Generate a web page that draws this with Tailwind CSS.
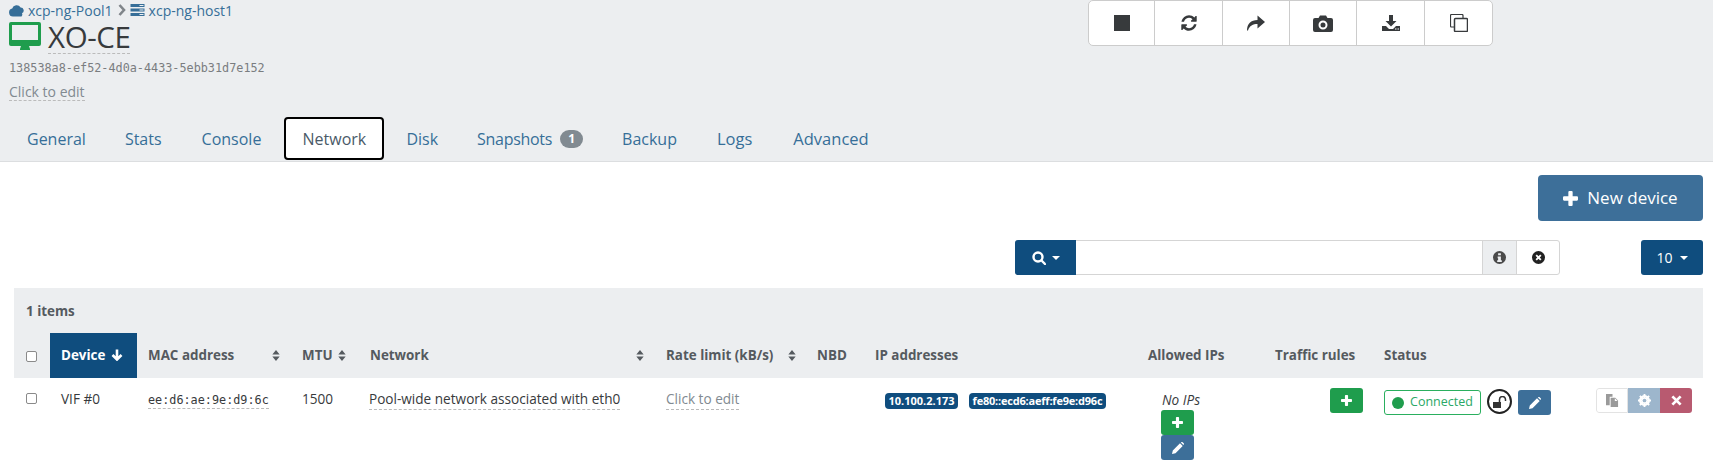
<!DOCTYPE html>
<html lang="en">
<head>
<meta charset="UTF-8">
<title>XO-CE Network</title>
<script src="https://cdn.jsdelivr.net/npm/@tailwindcss/browser@4"></script>
</head>
<body class="bg-white font-['Open_Sans',sans-serif] text-[14px] text-[#373a3c] overflow-hidden">
<div class="w-[1713px] h-[464px] overflow-hidden">

  <!-- Header -->
  <div class="bg-[#eceef0] h-[162px] border-b border-[#dcdee0]">
    <div class="flex h-[115px]">
      <div class="w-[1088px] pl-[9px]">
        <div class="h-[22px] flex items-center text-[14px] text-[#366e98] -mt-[1px]">
          <svg viewBox="0 0 16 12" class="w-[16px] h-[13px]" fill="#366e98"><path d="M4 12a4 4 0 0 1-.8-7.900A4.600 4.600 0 0 1 11.600 3 3 3 0 0 1 13 8.700 3 3 0 0 1 12.500 12z"/></svg>
          <span class="ml-[3px]">xcp-ng-Pool1</span>
          <svg viewBox="0 0 8 12" class="w-[8px] h-[12px] ml-[5px]" fill="none" stroke="#80858a" stroke-width="2.600"><path d="M1.500 1l4.500 5-4.500 5"/></svg>
          <svg viewBox="0 0 14 12" class="w-[15px] h-[12px] ml-[4px]" fill="#366e98"><path d="M0 0h14v3H0zM0 4.500h14v3H0zM0 9h14v3H0z"/><path d="M9 1h4v1H9zM9 5.500h4v1H9zM9 10h4v1H9z" fill="#eceef0"/></svg>
          <span class="ml-[4px]">xcp-ng-host1</span>
        </div>
        <div class="flex items-start h-[34px]">
          <svg viewBox="0 0 32 28" class="w-[32px] h-[28px] mt-[1px]" fill="#1f9d4d"><path fill-rule="evenodd" d="M2 0h28a2 2 0 0 1 2 2v20a2 2 0 0 1-2 2H20l1 3v1H11v-1l1-3H2a2 2 0 0 1-2-2V2a2 2 0 0 1 2-2zm1 3v15h26V3z"/></svg>
          <span class="ml-[7px] text-[29.500px] leading-[32px] font-medium tracking-[-0.4px] text-[#373a3c] border-b border-dashed border-[#bbb] h-[33px] pb-[1px]">XO-CE</span>
        </div>
        <div class="font-['DejaVu_Sans_Mono',monospace] text-[11.800px] leading-[14px] text-[#7a7d80] mt-[6px]">138538a8-ef52-4d0a-4433-5ebb31d7e152</div>
        <div class="mt-[6px]"><span class="text-[14px] leading-[16px] inline-block text-[#818a91] border-b border-dashed border-[#bbb]">Click to edit</span></div>
      </div>
      <div class="w-[405px] h-[46px] flex bg-white border border-[#cccccc] rounded-[5px] text-[#373a3c]">
        <div class="w-[66px] flex items-center justify-center border-r border-[#cccccc]">
          <svg viewBox="0 0 16 16" class="w-[16px] h-[16px]" fill="#373a3c"><rect width="16" height="16"/></svg>
        </div>
        <div class="w-[68px] flex items-center justify-center border-r border-[#cccccc]">
          <svg viewBox="0 0 1792 1792" class="w-[18px] h-[18px]" fill="#373a3c"><path d="M1639 1056q0 5-1 7-64 268-268 434.500t-478 166.500q-146 0-282.500-55t-243.500-157l-129 129q-19 19-45 19t-45-19-19-45v-448q0-26 19-45t45-19h448q26 0 45 19t19 45-19 45l-137 137q71 66 161 102t187 36q134 0 250-65t186-179q11-17 53-117 8-23 30-23h192q13 0 22.500 9.500t9.500 22.500zm25-800v448q0 26-19 45t-45 19h-448q-26 0-45-19t-19-45 19-45l138-138q-148-137-349-137-134 0-250 65t-186 179q-11 17-53 117-8 23-30 23h-199q-13 0-22.500-9.500t-9.500-22.500v-7q65-268 270-434.500t480-166.500q146 0 284 55.500t245 156.500l130-129q19-19 45-19t45 19 19 45z"/></svg>
        </div>
        <div class="w-[67px] flex items-center justify-center border-r border-[#cccccc]">
          <svg viewBox="0 0 18 16" class="w-[18px] h-[16px]" fill="#373a3c"><path d="M0 15.500C0 9 4 5 10.500 5V.500L18 7l-7.500 6.500V9C6 9 2.500 10.500 1 15.500z"/></svg>
        </div>
        <div class="w-[67px] flex items-center justify-center border-r border-[#cccccc]">
          <svg viewBox="0 0 20 17" class="w-[20px] h-[17px]" fill="#373a3c"><path fill-rule="evenodd" d="M2 3h3.500L7 .500h6L14.500 3H18a2 2 0 0 1 2 2v10a2 2 0 0 1-2 2H2a2 2 0 0 1-2-2V5a2 2 0 0 1 2-2zm8 2.500a4.500 4.500 0 1 0 0 9 4.500 4.500 0 0 0 0-9zm0 2a2.500 2.500 0 1 1 0 5 2.500 2.500 0 0 1 0-5z"/></svg>
        </div>
        <div class="w-[68px] flex items-center justify-center border-r border-[#cccccc]">
          <svg viewBox="0 0 18 16" class="w-[18px] h-[16px]" fill="#373a3c"><path d="M7 0h4v6h3.500L9 11.500 3.500 6H7z"/><path fill-rule="evenodd" d="M0 11h4l3 3h4l3-3h4v5H0zm13 2.500v1h1.500v-1zm2.500 0v1H17v-1z"/></svg>
        </div>
        <div class="flex-1 flex items-center justify-center">
          <svg viewBox="0 0 18 18" class="w-[18px] h-[18px]" fill="none" stroke="#373a3c" stroke-width="1.200"><path d="M4 13H1.500a1 1 0 0 1-1-1V1.500a1 1 0 0 1 1-1H12a1 1 0 0 1 1 1V4"/><rect x="4.500" y="4.500" width="13" height="13" rx="1" stroke-width="1.500"/></svg>
        </div>
      </div>
    </div>
    <div class="flex pl-[9px] h-[46px] items-center text-[16px] text-[#366e98]">
      <a class="pl-[18px] pr-[18px] pt-[2px]">General</a>
      <a class="pl-[21px] pr-[22px] pt-[2px]">Stats</a>
      <a class="px-[18px] pt-[2px]">Console</a>
      <a class="ml-[5px] w-[100px] h-[43px] pt-[1px] flex items-center justify-center bg-white border-2 border-black rounded-[4px] text-[#4a5a68]">Network</a>
      <a class="ml-[22px] pt-[2px]">Disk</a>
      <a class="ml-[39px] pt-[2px] flex items-center tracking-[-0.3px]">Snapshots<span class="ml-[8px] w-[23px] h-[18px] rounded-full bg-[#818a91] text-white text-[12px] font-bold flex items-center justify-center">1</span></a>
      <a class="ml-[39px] pt-[2px]">Backup</a>
      <a class="ml-[40px] pt-[2px] text-[16.500px]">Logs</a>
      <a class="ml-[41px] pt-[2px] text-[16.500px]">Advanced</a>
    </div>
  </div>

  <!-- Toolbar -->
  <div class="flex justify-end pr-[10px] pt-[13px]">
    <button class="w-[165px] h-[46px] rounded-[4px] bg-[#3d6f99] text-white text-[17px] flex items-center justify-center gap-[9px]">
      <svg viewBox="0 0 14 14" class="w-[15px] h-[15px]" fill="#fff"><path d="M5 1a1 1 0 0 1 1-1h2a1 1 0 0 1 1 1v4h4a1 1 0 0 1 1 1v2a1 1 0 0 1-1 1H9v4a1 1 0 0 1-1 1H6a1 1 0 0 1-1-1V9H1a1 1 0 0 1-1-1V6a1 1 0 0 1 1-1h4z"/></svg>
      New device
    </button>
  </div>
  <div class="flex pt-[19px] pl-[1015px] h-[67px]">
    <div class="w-[545px] h-[35px] flex rounded-[3px] border border-[#d5d5d5]">
      <div class="-m-[1px] w-[61px] h-[35px] bg-[#0f4d7e] rounded-l-[3px] flex items-center justify-center gap-[6px]">
        <svg viewBox="0 0 14 14" class="w-[14px] h-[14px]" fill="none" stroke="#fff" stroke-width="2.400"><circle cx="6" cy="6" r="4.500"/><path d="M9.500 9.500l3.500 3.500" stroke-linecap="round"/></svg>
        <span class="border-x-[4px] border-t-[4px] border-x-transparent border-t-white"></span>
      </div>
      <div class="flex-1"></div>
      <div class="w-[35px] bg-[#eceef0] border-x border-[#d5d5d5] flex items-center justify-center">
        <svg viewBox="0 0 14 14" class="w-[13px] h-[13px]"><circle cx="7" cy="7" r="7" fill="#4a4a4a"/><path d="M5.500 2.500h3v2h-3zM5 6h3.500v4H9.500v1.800h-5V10H5.500V7.800H5z" fill="#eceef0"/></svg>
      </div>
      <div class="w-[42px] flex items-center justify-center">
        <svg viewBox="0 0 14 14" class="w-[13px] h-[13px]"><circle cx="7" cy="7" r="7" fill="#222"/><path d="M4.500 4.500l5 5M9.500 4.500l-5 5" stroke="#fff" stroke-width="2"/></svg>
      </div>
    </div>
    <button class="ml-[81px] w-[62px] h-[35px] rounded-[3px] bg-[#0f4d7e] text-white text-[14px] flex items-center justify-center gap-[7px]">10<span class="border-x-[4px] border-t-[4px] border-x-transparent border-t-white"></span></button>
  </div>

  <!-- Table -->
  <div class="ml-[14px] w-[1689px]">
    <div class="bg-[#eceef0] h-[45px] pl-[12px] pt-[13px] text-[13.400px] leading-[20px] font-bold text-[#555a5f]">1 items</div>
    <table class="table-fixed border-collapse w-[1689px] text-left">
      <colgroup>
        <col class="w-[36px]"><col class="w-[87px]"><col class="w-[154px]"><col class="w-[68px]"><col class="w-[296px]"><col class="w-[151px]"><col class="w-[58px]"><col class="w-[273px]"><col class="w-[127px]"><col class="w-[109px]"><col class="w-[330px]">
      </colgroup>
      <thead class="bg-[#eceef0] text-[13.400px] font-bold text-[#555a5f]">
        <tr class="h-[45px]">
          <th class="pl-[12px] pt-[1px]"><span class="block w-[11px] h-[11px] bg-white border border-[#8a8a8a] rounded-[2px]"></span></th>
          <th class="bg-[#0f4d7e] text-white pl-[11px] h-[44px]">
            <span class="flex items-center gap-[6px]">Device
              <svg viewBox="0 0 12 12" class="w-[12px] h-[12px]" fill="none" stroke="#fff" stroke-width="2.600"><path d="M6 .500v10M1.500 6L6 10.500 10.500 6"/></svg>
            </span>
          </th>
          <th class="pl-[11px]"><span class="flex items-center justify-between pr-[11px]">MAC address<svg viewBox="0 0 8 12" class="w-[8px] h-[11px]" fill="#555a5f"><path d="M4 0l4 5H0zM4 12L0 7h8z"/></svg></span></th>
          <th class="pl-[11px]"><span class="flex items-center gap-[5px]">MTU<svg viewBox="0 0 8 12" class="w-[8px] h-[11px]" fill="#555a5f"><path d="M4 0l4 5H0zM4 12L0 7h8z"/></svg></span></th>
          <th class="pl-[11px]"><span class="flex items-center justify-between pr-[11px]">Network<svg viewBox="0 0 8 12" class="w-[8px] h-[11px]" fill="#555a5f"><path d="M4 0l4 5H0zM4 12L0 7h8z"/></svg></span></th>
          <th class="pl-[11px]"><span class="flex items-center justify-between pr-[10px]">Rate limit (kB/s)<svg viewBox="0 0 8 12" class="w-[8px] h-[11px]" fill="#555a5f"><path d="M4 0l4 5H0zM4 12L0 7h8z"/></svg></span></th>
          <th class="pl-[11px]">NBD</th>
          <th class="pl-[11px]">IP addresses</th>
          <th class="pl-[11px]">Allowed IPs</th>
          <th class="pl-[11px]">Traffic rules</th>
          <th class="pl-[11px]">Status</th>
        </tr>
      </thead>
      <tbody class="text-[13.600px]">
        <tr class="align-top">
          <td class="pl-[12px] pt-[15px]"><span class="block w-[11px] h-[11px] bg-white border border-[#8a8a8a] rounded-[2px]"></span></td>
          <td class="pl-[11px] pt-[11px] leading-[20px]">VIF #0</td>
          <td class="pl-[11px] pt-[11px]"><span class="font-['DejaVu_Sans_Mono',monospace] text-[11.800px] leading-[16px] inline-block border-b border-dashed border-[#bbb]">ee:d6:ae:9e:d9:6c</span></td>
          <td class="pl-[11px] pt-[11px] leading-[20px]">1500</td>
          <td class="pl-[10px] pt-[11px]"><span class="leading-[20px] inline-block border-b border-dashed border-[#bbb]">Pool-wide network associated with eth0</span></td>
          <td class="pl-[11px] pt-[11px]"><span class="leading-[20px] inline-block text-[#818a91] border-b border-dashed border-[#bbb]">Click to edit</span></td>
          <td></td>
          <td class="pl-[21px] pt-[15px]">
            <div class="flex gap-[11px] text-white text-[11px] font-bold leading-[16px]">
              <span class="w-[73px] text-center bg-[#0f4d7e] rounded-[4px]">10.100.2.173</span>
              <span class="w-[137px] text-center bg-[#0f4d7e] rounded-[4px] tracking-[-0.2px]">fe80::ecd6:aeff:fe9e:d96c</span>
            </div>
          </td>
          <td class="pl-[24px] pt-[11px]">
            <div class="italic leading-[21px] pl-[1px]">No IPs</div>
            <button class="block w-[33px] h-[25px] rounded-[3px] bg-[#1f9d4d] flex items-center justify-center">
              <svg viewBox="0 0 14 14" class="w-[11px] h-[11px]" fill="#fff"><path d="M5 1a1 1 0 0 1 1-1h2a1 1 0 0 1 1 1v4h4a1 1 0 0 1 1 1v2a1 1 0 0 1-1 1H9v4a1 1 0 0 1-1 1H6a1 1 0 0 1-1-1V9H1a1 1 0 0 1-1-1V6a1 1 0 0 1 1-1h4z"/></svg>
            </button>
            <button class="block w-[33px] h-[25px] rounded-[3px] bg-[#3d6f99] flex items-center justify-center">
              <svg viewBox="0 0 12 12" class="w-[12px] h-[12px]" fill="#fff"><path d="M0 12l.8-3.500L8 1.300l2.700 2.700-7.200 7.200zM8.800.500l.5-.3a1 1 0 0 1 1.300 0l1.100 1.100a1 1 0 0 1 0 1.300l-.3.500z"/></svg>
            </button>
          </td>
          <td class="pl-[66px] pt-[10px]">
            <button class="w-[33px] h-[25px] rounded-[3px] bg-[#1f9d4d] flex items-center justify-center">
              <svg viewBox="0 0 14 14" class="w-[11px] h-[11px]" fill="#fff"><path d="M5 1a1 1 0 0 1 1-1h2a1 1 0 0 1 1 1v4h4a1 1 0 0 1 1 1v2a1 1 0 0 1-1 1H9v4a1 1 0 0 1-1 1H6a1 1 0 0 1-1-1V9H1a1 1 0 0 1-1-1V6a1 1 0 0 1 1-1h4z"/></svg>
            </button>
          </td>
          <td class="pl-[11px] pt-[10px]">
            <div class="flex">
              <span class="mt-[2px] w-[97px] h-[25px] rounded-[3px] border border-[#2aaf5e] flex items-center justify-center gap-[6px] text-[12.500px] text-[#2aa866]">
                <span class="w-[12px] h-[12px] rounded-full bg-[#1f9d4d]"></span>Connected
              </span>
              <span class="ml-[6px] mt-[1px] w-[25px] h-[25px] rounded-full border-2 border-[#222] flex items-center justify-center">
                <svg viewBox="0 0 14 12" class="w-[14px] h-[12px]" fill="#333"><path d="M0 6h8v6H0z"/><path d="M6.500 6V3.500a3 3 0 0 1 6 0V5" fill="none" stroke="#333" stroke-width="1.500"/></svg>
              </span>
              <button class="ml-[6px] mt-[2px] w-[33px] h-[25px] rounded-[3px] bg-[#3d6f99] flex items-center justify-center">
                <svg viewBox="0 0 12 12" class="w-[12px] h-[12px]" fill="#fff"><path d="M0 12l.8-3.500L8 1.300l2.700 2.700-7.200 7.200zM8.800.500l.5-.3a1 1 0 0 1 1.300 0l1.100 1.100a1 1 0 0 1 0 1.300l-.3.500z"/></svg>
              </button>
              <div class="ml-[45px] flex w-[96px] h-[25px] rounded-[3px] overflow-hidden">
                <span class="w-[32px] bg-white border border-[#e3e3e3] rounded-l-[3px] flex items-center justify-center">
                  <svg viewBox="0 0 14 14" class="w-[13px] h-[13px]"><path d="M0 0h7v3H4v9H0z" fill="#9a9a9a"/><path d="M5 4h5l3 3v7H5z" fill="#9a9a9a"/><path d="M9.500 4.500v3h3" fill="#fff"/></svg>
                </span>
                <span class="w-[32px] bg-[#9db6cc] flex items-center justify-center">
                  <svg viewBox="0 0 14 14" class="w-[13px] h-[13px]"><circle cx="7" cy="7" r="4.500" fill="none" stroke="#fff" stroke-width="2.800"/><path d="M7 0v14M0 7h14M2 2l10 10M12 2L2 12" stroke="#fff" stroke-width="2"/><circle cx="7" cy="7" r="2" fill="#9db6cc"/></svg>
                </span>
                <span class="w-[32px] bg-[#b85a70] flex items-center justify-center">
                  <svg viewBox="0 0 12 12" class="w-[11px] h-[11px]" fill="none" stroke="#fff" stroke-width="3"><path d="M1.500 1.500l9 9M10.500 1.500l-9 9"/></svg>
                </span>
              </div>
            </div>
          </td>
        </tr>
      </tbody>
    </table>
  </div>
</div>
</body>
</html>
